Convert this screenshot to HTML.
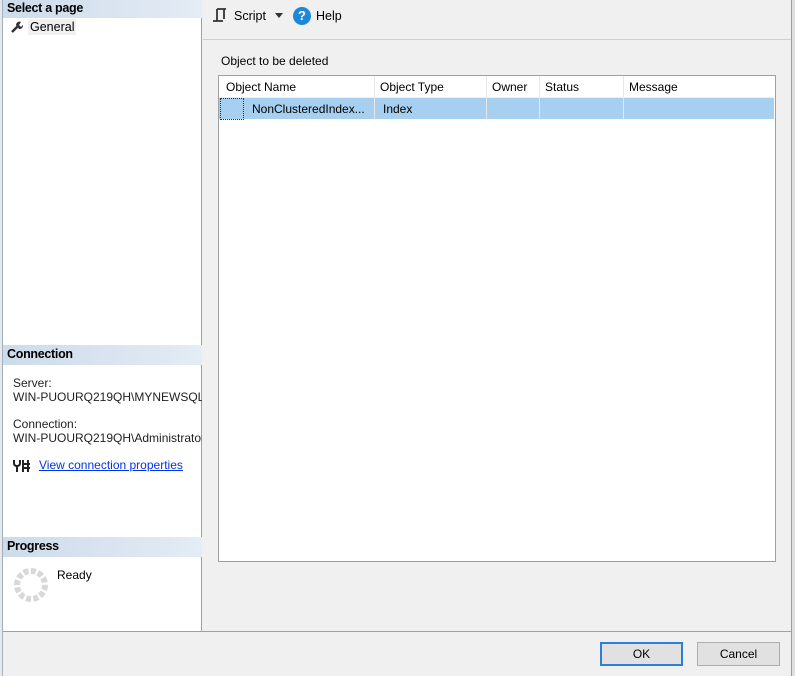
<!DOCTYPE html>
<html><head><meta charset="utf-8"><style>
*{box-sizing:border-box;margin:0;padding:0}
body{width:795px;height:676px;overflow:hidden;background:#f0f0f0;font-family:"Liberation Sans",sans-serif;font-size:12px;color:#000;position:relative}
.abs{position:absolute}
.hdr{position:absolute;left:3px;width:199px;height:20px;background:linear-gradient(90deg,#cddbea,#e4ecf5);font-weight:bold;font-size:12.5px;padding:2px 0 0 4px;letter-spacing:-0.3px}
</style></head><body>
<div class="abs" style="left:0;top:0;width:3px;height:676px;background:#e8e8e8;border-right:1px solid #a0b0c0"></div>
<div class="abs" style="left:3px;top:0;width:199px;height:631px;background:#fff;border-right:1px solid #a0a0a0"></div>
<div class="hdr" style="top:0;height:18px;padding-top:1px">Select a page</div>
<svg class="abs" style="left:10px;top:20px" width="14" height="14" viewBox="0 0 14 14"><path d="M2 12 L8 6" stroke="#333" stroke-width="2.5"/><path d="M6 5 A3.5 3.5 0 0 1 11 2 L9 5 L11 7 L13 5 A3.5 3.5 0 0 1 9 9 Z" fill="#333"/></svg>
<div class="abs" style="left:28px;top:19px;background:#f0f0f0;padding:1px 2px;font-size:12.5px">General</div>
<div class="hdr" style="top:345px">Connection</div>
<div class="abs" style="left:13px;top:376px;line-height:14px;width:189px;overflow:hidden;white-space:nowrap;color:#222">Server:<br>WIN-PUOURQ219QH\MYNEWSQL</div>
<div class="abs" style="left:13px;top:417px;line-height:14px;width:189px;overflow:hidden;white-space:nowrap;color:#222">Connection:<br>WIN-PUOURQ219QH\Administrator</div>
<svg class="abs" style="left:13px;top:457px" width="18" height="16" viewBox="0 0 18 16"><path d="M1 3 V6 Q1 9 4 9 Q7 9 7 6 V3 M4 9 V15 M10 3 V15 M15 3 V15 M9 7 H17 M9 11 H17" stroke="#222" stroke-width="2" fill="none"/></svg>
<div class="abs" style="left:39px;top:458px;color:#0033ee;text-decoration:underline">View connection properties</div>
<div class="hdr" style="top:537px">Progress</div>
<svg class="abs" style="left:13px;top:567px" width="36" height="36" viewBox="0 0 36 36"><circle cx="18" cy="18" r="14" fill="none" stroke="#d8d8d8" stroke-width="6" stroke-dasharray="5 2.3"/></svg>
<div class="abs" style="left:57px;top:568px">Ready</div>
<div class="abs" style="left:203px;top:39px;width:588px;height:1px;background:#d0d0d0"></div>
<svg class="abs" style="left:212px;top:7px" width="16" height="18" viewBox="0 0 16 18"><path d="M5 2 H14 M5 2 V14 H1 M5 14 H11 M12 2 V12" stroke="#333" stroke-width="1.8" fill="none"/></svg>
<div class="abs" style="left:234px;top:9px;font-size:12.5px">Script</div>
<div class="abs" style="left:275px;top:13px;width:0;height:0;border-left:4px solid transparent;border-right:4px solid transparent;border-top:5px solid #333"></div>
<div class="abs" style="left:293px;top:7px;width:18px;height:18px;border-radius:50%;background:#1e88d8;color:#fff;font-weight:bold;font-size:13px;text-align:center;line-height:18px">?</div>
<div class="abs" style="left:316px;top:9px;font-size:12.5px">Help</div>
<div class="abs" style="left:221px;top:54px">Object to be deleted</div>
<div class="abs" style="left:218px;top:75px;width:558px;height:487px;background:#fff;border:1px solid #a0a0a0"></div>
<div class="abs" style="left:219px;top:76px;width:556px;height:21px;background:#fff"></div>
<div class="abs" style="left:219px;top:98px;width:555px;height:21px;background:#a6cff0"></div>
<div class="abs" style="left:374px;top:76px;width:1px;height:43px;background:#e8e8e8"></div>
<div class="abs" style="left:486px;top:76px;width:1px;height:43px;background:#e8e8e8"></div>
<div class="abs" style="left:539px;top:76px;width:1px;height:43px;background:#e8e8e8"></div>
<div class="abs" style="left:623px;top:76px;width:1px;height:43px;background:#e8e8e8"></div>
<div class="abs" style="left:219px;top:97px;width:555px;height:1px;background:#eee"></div>
<div class="abs" style="left:226px;top:80px">Object Name</div>
<div class="abs" style="left:380px;top:80px">Object Type</div>
<div class="abs" style="left:492px;top:80px">Owner</div>
<div class="abs" style="left:545px;top:80px">Status</div>
<div class="abs" style="left:629px;top:80px">Message</div>
<div class="abs" style="left:220px;top:98px;width:24px;height:22px;border:1px dotted #333"></div>
<div class="abs" style="left:252px;top:102px">NonClusteredIndex...</div>
<div class="abs" style="left:383px;top:102px">Index</div>
<div class="abs" style="left:791px;top:0;width:4px;height:676px;background:#e0e0e0;border-left:1px solid #6aa8e0"></div>
<div class="abs" style="left:3px;top:631px;width:788px;height:1px;background:#a0a0a0"></div>
<div class="abs" style="left:600px;top:642px;width:83px;height:24px;border:2px solid #2a7fd8;background:#e1e1e1;text-align:center;line-height:20px">OK</div>
<div class="abs" style="left:697px;top:642px;width:83px;height:24px;border:1px solid #adadad;background:#e1e1e1;text-align:center;line-height:22px">Cancel</div>
</body></html>
